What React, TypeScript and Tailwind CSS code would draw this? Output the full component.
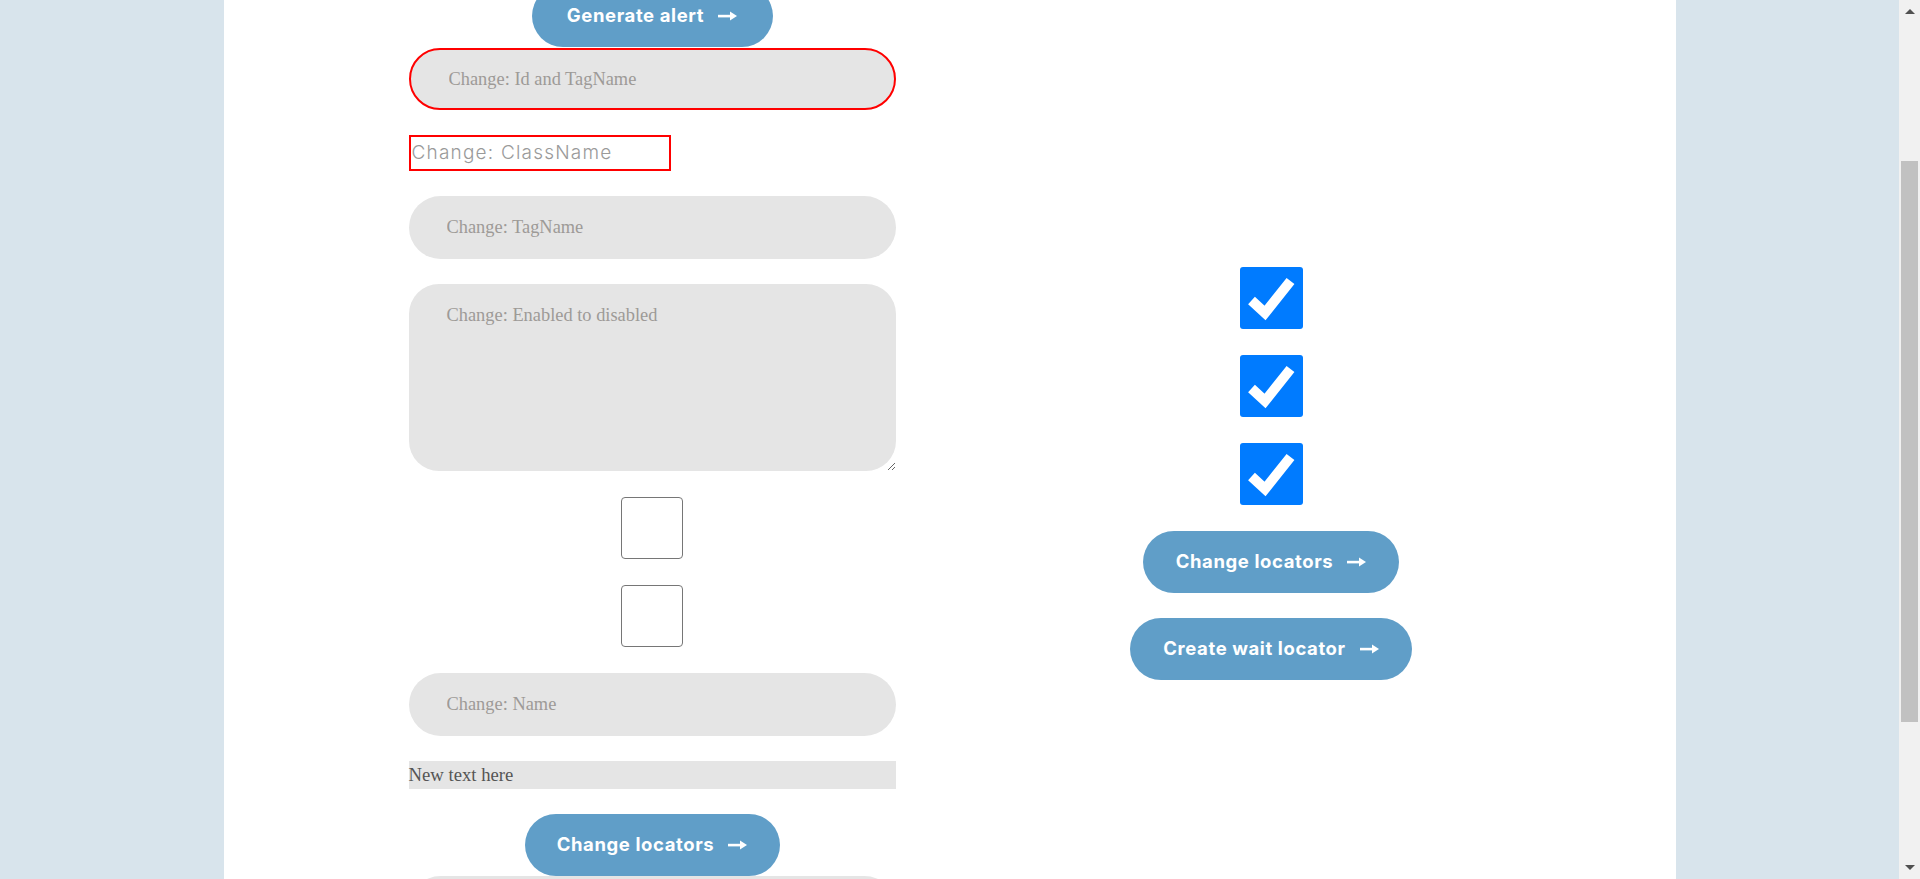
import React from "react"

const serif = "font-['Liberation_Serif','Times_New_Roman',serif]"
const sans = "font-['Inter','Noto_Sans',sans-serif]"

function Arrow() {
  return (
    <svg width="19" height="10" viewBox="0 0 19 10" className="shrink-0">
      <rect x="0" y="3.8" width="13" height="2.6" fill="white" />
      <polygon points="12,0.5 19,5 12,9.5" fill="white" />
    </svg>
  )
}

function PillButton({ label, width }: { label: string; width: string }) {
  return (
    <button
      type="button"
      className={`${width} flex h-[62px] shrink-0 items-center justify-center gap-[14px] rounded-full bg-[#609ec8] text-[18.5px] font-bold tracking-[0.6px] text-white ${sans}`}
    >
      <span>{label}</span>
      <Arrow />
    </button>
  )
}

function GrayInput({ placeholder, bordered }: { placeholder?: string; bordered?: boolean }) {
  return (
    <input
      placeholder={placeholder}
      className={`w-[487px] rounded-full bg-[#e5e5e5] pl-[38px] text-[18.4px] text-[#444] outline-none placeholder:text-[#9d9a97] ${serif} ${
        bordered ? "h-[62px] border-2 border-[#ff0000]" : "h-[63px]"
      }`}
    />
  )
}

function CheckedBox() {
  return (
    <div className="flex h-[62px] w-[63px] items-center justify-center rounded-[3px] bg-[#007bff]">
      <svg width="63" height="62" viewBox="0 0 63 62">
        <polyline
          points="11.5,33.5 25,46 50.5,14"
          fill="none"
          stroke="white"
          strokeWidth="10"
          strokeLinejoin="miter"
        />
      </svg>
    </div>
  )
}

function EmptyBox() {
  return <div className="h-[62px] w-[62px] rounded-[4px] border border-[#767676] bg-white" />
}

function Scrollbar() {
  return (
    <div className="flex h-full w-[21px] shrink-0 flex-col items-center bg-[#f1f1f1]">
      <div className="mt-[9px] h-0 w-0 border-x-[5px] border-b-[5px] border-x-transparent border-b-[#505050]" />
      <div className="ml-[2px] mr-[2px] mt-[147px] h-[561px] w-[17px] self-start bg-[#c1c1c1]" />
      <div className="mt-auto mb-[9px] h-0 w-0 border-x-[5px] border-t-[5px] border-x-transparent border-t-[#505050]" />
    </div>
  )
}

export default function App() {
  return (
    <div className="flex h-[879px] w-full overflow-hidden bg-[#d8e4ec]">
      <main className="flex flex-1 justify-center overflow-hidden">
        <div className="h-full w-[1452px] overflow-hidden bg-white">
          <div className="-mt-[15px] flex pl-[185px]">
            {/* left column */}
            <div className="flex w-[487px] flex-col items-center">
              <PillButton label="Generate alert" width="w-[241px]" />
              <div className="mt-px">
                <GrayInput placeholder="Change: Id and TagName" bordered />
              </div>
              <div
                className={`mt-[25px] flex h-[36px] w-[262px] items-center self-start border-2 border-[#ff0000] pl-px text-[19px] font-light tracking-[1.2px] text-[#9a9a9a] ${sans}`}
              >
                Change: ClassName
              </div>
              <div className="mt-[25px]">
                <GrayInput placeholder="Change: TagName" />
              </div>
              <textarea
                placeholder="Change: Enabled to disabled"
                className={`mt-[25px] h-[187px] w-[487px] rounded-[30px] bg-[#e5e5e5] pl-[38px] pt-[18px] text-[18.4px] outline-none placeholder:text-[#9d9a97] ${serif}`}
              />
              <div className="mt-[26px]">
                <EmptyBox />
              </div>
              <div className="mt-[26px]">
                <EmptyBox />
              </div>
              <div className="mt-[26px]">
                <GrayInput placeholder="Change: Name" />
              </div>
              <div className={`mt-[25px] h-[28px] w-[487px] bg-[#e5e5e5] text-[18.7px] leading-[28px] text-[#555] ${serif}`}>
                New text here
              </div>
              <div className="mt-[25px]">
                <PillButton label="Change locators" width="w-[255px]" />
              </div>
              <GrayInput />
            </div>

            {/* right column */}
            <div className="ml-[132px] mt-[282px] flex w-[487px] flex-col items-center">
              <CheckedBox />
              <div className="mt-[26px]">
                <CheckedBox />
              </div>
              <div className="mt-[26px]">
                <CheckedBox />
              </div>
              <div className="mt-[26px]">
                <PillButton label="Change locators" width="w-[256px]" />
              </div>
              <div className="mt-[25px]">
                <PillButton label="Create wait locator" width="w-[282px]" />
              </div>
            </div>
          </div>
        </div>
      </main>
      <Scrollbar />
    </div>
  )
}
